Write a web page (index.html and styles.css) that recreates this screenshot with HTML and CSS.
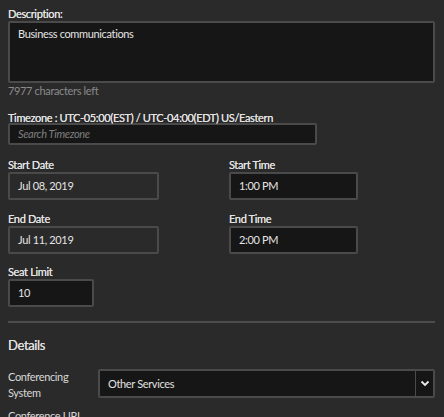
FILE: index.html
```html
<!DOCTYPE html>
<html>
<head>
<meta charset="utf-8">
<link rel="stylesheet" href="styles.css">
</head>
<body>
<div class="form">
  <div class="field">
    <div class="label">Description:</div>
    <div class="textarea">Business communications</div>
    <div class="hint">7977 characters left</div>
  </div>
  <div class="field tz">
    <div class="label">Timezone : UTC-05:00(EST) / UTC-04:00(EDT) US/Eastern</div>
    <div class="input search"><span class="placeholder">Search Timezone</span></div>
  </div>
  <div class="row first">
    <div class="col">
      <div class="label">Start Date</div>
      <div class="input date">Jul 08, 2019</div>
    </div>
    <div class="col">
      <div class="label">Start Time</div>
      <div class="input time">1:00 PM</div>
    </div>
  </div>
  <div class="row">
    <div class="col">
      <div class="label">End Date</div>
      <div class="input date">Jul 11, 2019</div>
    </div>
    <div class="col">
      <div class="label">End Time</div>
      <div class="input time">2:00 PM</div>
    </div>
  </div>
  <div class="field seat">
    <div class="label">Seat Limit</div>
    <div class="input seatin">10</div>
  </div>
  <hr class="divider">
  <div class="heading">Details</div>
  <div class="inline">
    <div class="ilabel">Conferencing<br>System</div>
    <div class="select">
      <span class="selval">Other Services</span>
      <span class="caret"><svg width="10" height="7" viewBox="0 0 10 7"><path d="M1.5 1.5 L5 5 L8.5 1.5" fill="none" stroke="#eee" stroke-width="1.8"/></svg></span>
    </div>
  </div>
  <div class="inline cut">
    <div class="ilabel">Conference URL</div>
  </div>
</div>
</body>
</html>
```
FILE: styles.css
```css
html, body {
  margin: 0;
  padding: 0;
  background: #2a2a2a;
  height: 100%;
  overflow: hidden;
}
body {
  font-family: Lato, "Open Sans", sans-serif;
  font-size: 11px;
  letter-spacing: -0.35px;
  color: #dcdcdc;
}
.form {
  padding: 7px 9px 0 8px;
  display: flex;
  flex-direction: column;
}
.label {
  color: #e2e2e2;
  line-height: 14px;
  text-shadow: 0 0 0.3px #e2e2e2;
}
.textarea {
  background: #161616;
  border: 2px solid #4a4a4a;
  border-radius: 2px;
  padding: 4px 8px 6px;
  height: 48px;
  color: #e4e4e4;
}
.hint {
  color: #8a8a8a;
  margin-top: 1px;
  line-height: 14px;
}
.tz {
  margin-top: 13px;
}
.input {
  border: 2px solid #4a4a4a;
  border-radius: 2px;
  box-sizing: border-box;
  height: 28px;
  line-height: 24px;
  padding: 0 8px;
  color: #e4e4e4;
}
.search {
  width: 309px;
  height: 22px;
  line-height: 18px;
  margin-top: -2px;
  background: #161616;
}
.placeholder {
  font-style: italic;
  color: #7e7e7e;
}
.row {
  display: flex;
  gap: 70px;
  margin-top: 12px;
}
.row.first {
  margin-top: 13px;
}
.col {
  display: flex;
  flex-direction: column;
}
.date {
  width: 151px;
  background: #2a2a2a;
}
.time {
  width: 129px;
  background: #161616;
}
.seat {
  margin-top: 11px;
}
.seatin {
  width: 86px;
  background: #161616;
}
.divider {
  border: none;
  border-top: 2px solid #4c4c4c;
  margin: 14px 0 0 0;
  width: 427px;
}
.heading {
  font-size: 13px;
  color: #e0e0e0;
  text-shadow: 0 0 0.4px #e0e0e0;
  margin-top: 14px;
  line-height: 16px;
}
.inline {
  display: flex;
  align-items: center;
  margin-top: 13px;
}
.ilabel {
  width: 91px;
  line-height: 16px;
  padding-top: 3px;
  color: #d8d8d8;
}
.select {
  flex: none;
  width: 337px;
  height: 29px;
  box-sizing: border-box;
  border: 2px solid #4a4a4a;
  border-radius: 2px;
  background: #161616;
  display: flex;
  align-items: center;
}
.selval {
  flex: 1;
  padding-left: 8px;
  color: #e0e0e0;
}
.caret {
  width: 17px;
  height: 100%;
  border-left: 1px solid #4a4a4a;
  display: flex;
  align-items: center;
  justify-content: center;
}
.cut {
  margin-top: 4px;
}
```
